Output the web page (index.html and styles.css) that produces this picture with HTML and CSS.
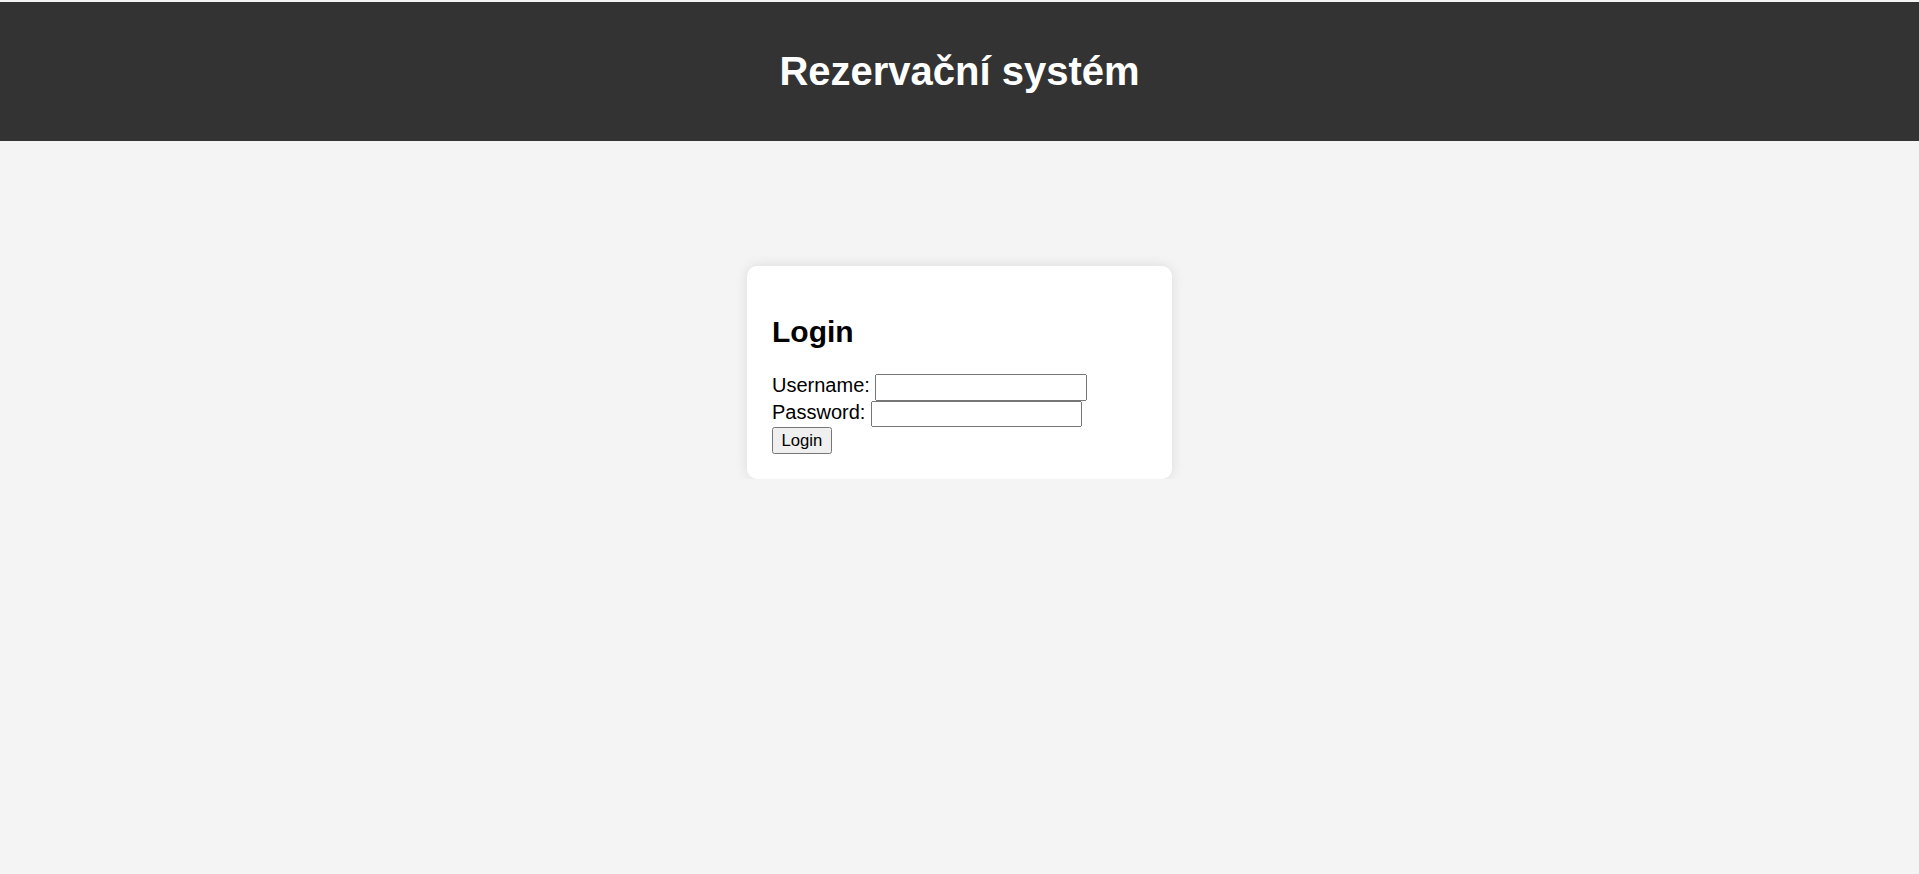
FILE: index.html
```html
<!DOCTYPE html>
<html lang="cs">
<head>
<meta charset="utf-8">
<title>Rezervační systém</title>
<link rel="stylesheet" href="styles.css">
</head>
<body class="page">
<header class="site-header">
  <h1 class="site-title">Rezervační systém</h1>
</header>
<main class="login-card">
  <h2 class="login-title">Login</h2>
  <form class="login-form">
    <label class="field-label" for="username">Username:</label>
    <input class="field-input" type="text" id="username" name="username"><br>
    <label class="field-label" for="password">Password:</label>
    <input class="field-input" type="password" id="password" name="password"><br>
    <button class="login-button" type="submit">Login</button>
  </form>
</main>
</body>
</html>
```

FILE: styles.css
```css
html {
  background: #f4f4f4;
}

.page {
  zoom: 1.25;
  margin: 0;
  padding-top: 2px;
  background: #f4f4f4;
  font-family: "Liberation Sans", Arial, sans-serif;
  font-size: 16px;
  color: #000;
}

.site-header {
  background: #333333;
  color: #ffffff;
  text-align: center;
  padding: 16px;
  margin-top: -0.4px;
}

.site-title {
  margin: 0.67em 0;
  font-size: 2em;
  font-weight: bold;
}

.login-card {
  display: block;
  width: 300px;
  margin: 100px auto 0;
  padding: 20px;
  background: #ffffff;
  border-radius: 8px;
  box-shadow: 0 0 10px rgba(0, 0, 0, 0.1);
}

.login-title {
  margin: 0.83em 0;
  font-size: 1.5em;
  font-weight: bold;
}

.login-form {
  margin: 0;
}

.field-input {
  box-sizing: border-box;
  width: 169px;
}
```
